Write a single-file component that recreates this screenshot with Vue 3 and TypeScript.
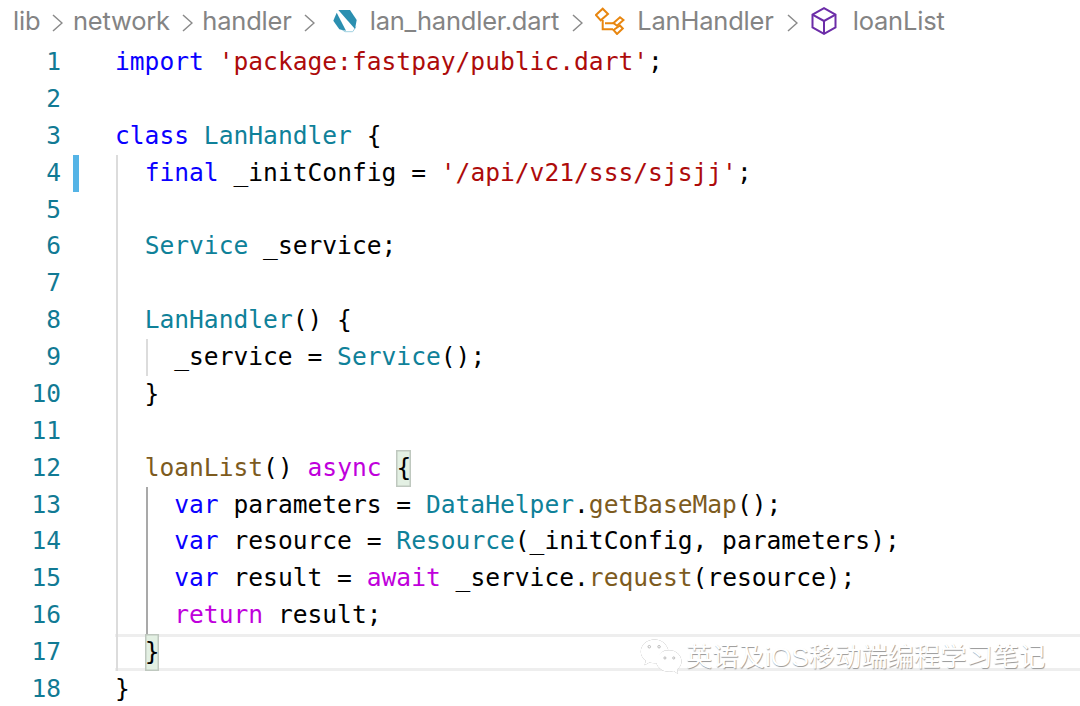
<script setup lang="ts">
type Tok = { t: string; c?: string; box?: boolean }
type Line = { toks: Tok[]; guides: { col: number; dark?: boolean }[]; mod?: boolean; cur?: boolean }
const g = (...cols: number[]) => cols.map((col) => ({ col }))
const lines: Line[] = [
  { toks: [{ t: 'import', c: 'kw' }, { t: ' ' }, { t: "'package:fastpay/public.dart'", c: 'str' }, { t: ';' }], guides: [] },
  { toks: [], guides: [] },
  { toks: [{ t: 'class', c: 'kw' }, { t: ' ' }, { t: 'LanHandler', c: 'ty' }, { t: ' {' }], guides: [] },
  { toks: [{ t: '  ' }, { t: 'final', c: 'kw' }, { t: ' _initConfig = ' }, { t: "'/api/v21/sss/sjsjj'", c: 'str' }, { t: ';' }], guides: g(0), mod: true },
  { toks: [], guides: g(0) },
  { toks: [{ t: '  ' }, { t: 'Service', c: 'ty' }, { t: ' _service;' }], guides: g(0) },
  { toks: [], guides: g(0) },
  { toks: [{ t: '  ' }, { t: 'LanHandler', c: 'ty' }, { t: '() {' }], guides: [] },
  { toks: [{ t: '    _service = ' }, { t: 'Service', c: 'ty' }, { t: '();' }], guides: g(2) },
  { toks: [{ t: '  }' }], guides: [] },
  { toks: [], guides: [] },
  { toks: [{ t: '  ' }, { t: 'loanList', c: 'fn' }, { t: '() ' }, { t: 'async', c: 'ctl' }, { t: ' ' }, { t: '{', box: true }], guides: [] },
  { toks: [{ t: '    ' }, { t: 'var', c: 'kw' }, { t: ' parameters = ' }, { t: 'DataHelper', c: 'ty' }, { t: '.' }, { t: 'getBaseMap', c: 'fn' }, { t: '();' }], guides: [{ col: 2, dark: true }] },
  { toks: [{ t: '    ' }, { t: 'var', c: 'kw' }, { t: ' resource = ' }, { t: 'Resource', c: 'ty' }, { t: '(_initConfig, parameters);' }], guides: [{ col: 2, dark: true }] },
  { toks: [{ t: '    ' }, { t: 'var', c: 'kw' }, { t: ' result = ' }, { t: 'await', c: 'ctl' }, { t: ' _service.' }, { t: 'request', c: 'fn' }, { t: '(resource);' }], guides: [{ col: 2, dark: true }] },
  { toks: [{ t: '    ' }, { t: 'return', c: 'ctl' }, { t: ' result;' }], guides: [{ col: 2, dark: true }] },
  { toks: [{ t: '  ' }, { t: '}', box: true }], guides: [], cur: true },
  { toks: [{ t: '}' }], guides: [] },
]
// Outer guide at column 0 runs from line 4 through line 17
lines.forEach((l, i) => {
  if (i >= 3 && i <= 16 && !l.guides.some((x) => x.col === 0)) l.guides = [{ col: 0 }, ...l.guides]
})
</script>

<template>
  <div class="page">
    <nav class="crumbs">
      <span>lib</span>
      <svg class="chev" viewBox="0 0 12 22"><path d="M2 3l9 8-9 8" /></svg>
      <span>network</span>
      <svg class="chev" viewBox="0 0 12 22"><path d="M2 3l9 8-9 8" /></svg>
      <span>handler</span>
      <svg class="chev" viewBox="0 0 12 22"><path d="M2 3l9 8-9 8" /></svg>
      <svg class="ico dart" viewBox="0 0 25 23">
        <path d="M7 18.300L12 21.700H19.700L23 16.700" fill="none" stroke="#9fd0e0" stroke-width="1" />
        <path d="M5.300 0H17L23.700 10 22 19z" fill="#2b8fb0" />
        <path d="M.3 10.700L3.700 2.700 13 20.700 6.300 19.300z" fill="#2b8fb0" />
      </svg>
      <span>lan_handler.dart</span>
      <svg class="chev c2" viewBox="0 0 12 22"><path d="M2 3l9 8-9 8" /></svg>
      <svg class="ico cls" viewBox="0 0 30 28">
        <g fill="none" stroke="#e8860f" stroke-width="2">
          <path d="M.9 8L7.700 1.700 13 7 5.700 13.300z" />
          <path d="M7.700 13V22.300H18M10 16.300H20" />
          <path d="M18.500 16L25 10.200 28.500 13 22 18.800z" />
          <path d="M18.500 23L25 18.500 27.800 21.500 22 27z" />
        </g>
      </svg>
      <span>LanHandler</span>
      <svg class="chev c3" viewBox="0 0 12 22"><path d="M2 3l9 8-9 8" /></svg>
      <svg class="ico cube" viewBox="0 0 26 28">
        <g fill="none" stroke="#6c2da8" stroke-width="2">
          <path d="M13 1.200l11.500 6.500v12.600L13 26.800 1.500 20.300V7.700z" />
          <path d="M1.500 7.700L13 14l11.500-6.300M13 14v12.800" />
        </g>
      </svg>
      <span>loanList</span>
    </nav>

    <main class="code">
      <div v-for="(l, i) in lines" :key="i" class="row" :class="{ cur: l.cur }">
        <span class="num">{{ i + 1 }}</span>
        <span class="mark" :class="{ on: l.mod }"></span>
        <pre class="text"><span v-for="gd in l.guides" :key="gd.col" class="guide" :class="{ dark: gd.dark }" :style="{ left: gd.col * 14.75 + 1 + 'px' }"></span><span v-for="(tk, j) in l.toks" :key="j" :class="[tk.c, { box: tk.box }]">{{ tk.t }}</span></pre>
      </div>
    </main>

    <div class="mark-wm">
      <svg class="wechat" viewBox="0 0 44 38">
        <path class="bub" d="M15 1C7 1 .8 6.500.8 13.500c0 3.800 2 7 5.200 9.300L4.500 27.500l5.200-2.800c1.700.5 3.400.8 5.300.8 1 0 1.600-.1 2.400-.2C17 17 24 11 29 12 27.500 5.500 22 1 15 1z" />
        <path class="bub" d="M30 12c-7.500 0-13.500 5-13.500 11S22.500 34 30 34c1.500 0 3-.2 4.300-.7L39 36.500l-1.200-4.700c2.900-2 4.700-5 4.700-8.300C42.500 17 37 12 30 12z" />
        <g fill="none" stroke="#aaa" stroke-width=".8">
          <circle cx="9.500" cy="8.500" r="1.300" /><circle cx="19.500" cy="8.500" r="1.300" />
          <circle cx="25.500" cy="20" r="1.100" /><circle cx="34.500" cy="20" r="1.100" />
        </g>
      </svg>
      <span class="wm-text">英语及iOS移动端编程学习笔记</span>
    </div>
  </div>
</template>

<style scoped>
.page {
  position: relative;
  width: 1080px;
  height: 706px;
  overflow: hidden;
  background: #fff;
}
.crumbs {
  height: 44px;
  display: flex;
  align-items: center;
  padding: 0 0 2px 13px;
  box-sizing: border-box;
  font: 25.500px/1 Inter, "Liberation Sans", sans-serif;
  letter-spacing: -0.200px;
  color: #848484;
  white-space: nowrap;
}
.chev {
  width: 12px;
  height: 22px;
  margin: 4px 9.500px 0 11px;
  flex: none;
}
.chev path {
  fill: none;
  stroke: #8a8a8a;
  stroke-width: 1.500;
}
.chev.c2 { margin-left: 12px; margin-right: 12px; }
.chev.c3 { margin-left: 12px; margin-right: 13px; }
.ico { flex: none; }
.dart { width: 25px; height: 23px; margin: 0 12px 0 8.500px; }
.cls { width: 30px; height: 28px; margin: 0 12px 0 0; }
.cube { width: 26px; height: 28px; margin: 0 16px 0 0; }
.row {
  position: relative;
  height: 36.880px;
  display: flex;
  align-items: stretch;
  box-sizing: border-box;
}
.num {
  width: 61px;
  flex: none;
  text-align: right;
  font: 24.500px/36.880px "DejaVu Sans Mono", monospace;
  color: #117a94;
}
.mark {
  width: 6px;
  margin-left: 12px;
  margin-right: 36px;
  flex: none;
}
.mark.on { background: #55b4e6; }
.text {
  position: relative;
  flex: 1;
  margin: 0;
  font: 24.600px/36.880px "DejaVu Sans Mono", monospace;
  color: #000;
}
.row.cur .text {
  box-shadow: inset 0 3px 0 #eeeeee, inset 0 -3px 0 #eeeeee;
}
.guide {
  position: absolute;
  top: 0;
  bottom: 0;
  width: 2px;
  background: #dcdcdc;
}
.guide.dark { background: #a9a9a9; width: 2.500px; }
.kw { color: #0a00ff; }
.str { color: #ad0b0b; }
.ty { color: #0f8199; }
.fn { color: #7d5b1e; }
.ctl { color: #c000dc; }
.box {
  display: inline-block;
  height: 36.880px;
  background: #e3f0e3;
  box-shadow: inset 0 0 0 1.500px #bfc8bf;
}
.mark-wm {
  position: absolute;
  left: 640px;
  top: 638px;
  display: flex;
  align-items: center;
  gap: 3px;
}
.wechat {
  width: 43px;
  height: 38px;
  flex: none;
  filter: drop-shadow(0.500px 0.500px 0.600px #8a8a8a);
}
.bub { fill: #fff; }
.wm-text {
  font: 26.300px/38px "Liberation Sans", "Noto Sans CJK SC", sans-serif;
  color: #fff;
  text-shadow: 0.600px 0.600px 0.700px #9a9a9a;
  white-space: nowrap;
}
</style>
